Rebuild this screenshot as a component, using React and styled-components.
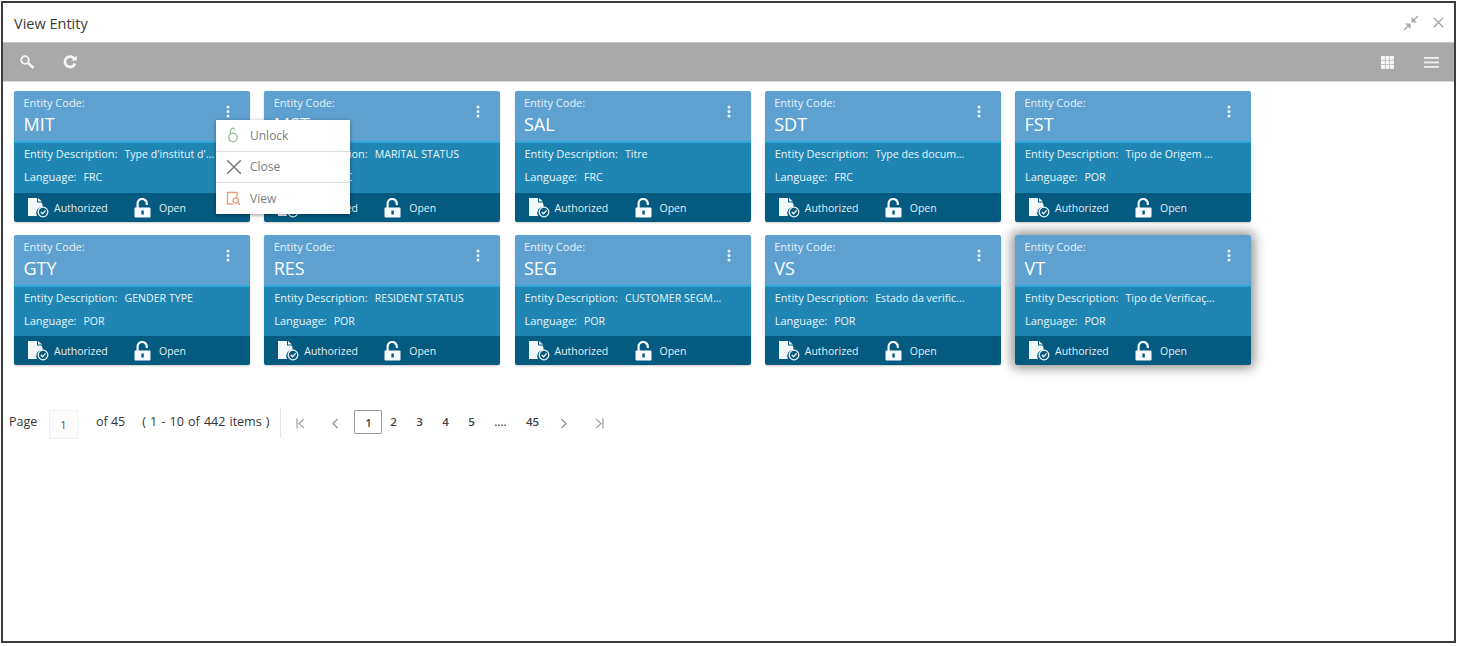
import React from 'react';
import styled, { createGlobalStyle } from 'styled-components';

const Global = createGlobalStyle`
  html, body { margin: 0; padding: 0; background: #fff; }
  body { font-family: "Open Sans", "Noto Sans", "Liberation Sans", sans-serif; }
`;
const Frame = styled.div`
  box-sizing: border-box; width: 1455px; height: 642px; margin: 1px 0 0 1px;
  border: 2px solid #3c3c3c; background: #fff; overflow: hidden;
`;
const Header = styled.header`
  height: 39px; padding: 0 11px; display: flex; align-items: center; justify-content: space-between;
  border-bottom: 1px solid #c8c8c8;
`;
const Title = styled.h1`
  margin: 3px 0 0; font-size: 14.5px; font-weight: 400; color: #3a3a3a; line-height: 1;
`;
const WinTools = styled.div`
  display: flex; align-items: center; gap: 14px; color: #a8a8a8; margin-right: -1px;
`;
const Toolbar = styled.div`
  height: 38px; background: #a9a9a9; display: flex; align-items: center; justify-content: space-between;
  padding: 0 15px 0 16px; border-bottom: 1px solid #d8d8d8;
`;
const ToolGroup = styled.div`
  display: flex; align-items: center; gap: ${p => p.$gap}px;
`;
const Cards = styled.div`
  display: grid; grid-template-columns: repeat(5, 236px); column-gap: 14.25px; row-gap: 13px;
  padding: 9px 0 0 11px;
`;
const Card = styled.article`
  position: relative; height: ${p => p.$h}px; display: flex; flex-direction: column; border-radius: 2px;
  color: #fff; box-shadow: ${p => p.$active ? '0 0 12px 3px rgba(0,0,0,.45)' : '0 1px 2px rgba(0,0,0,.2)'};
`;
const CardHead = styled.div`
  position: relative; flex: 0 0 52px; box-sizing: border-box; padding: 5px 9.5px 0; background: #5ea1d0;
  border-bottom: 2px solid #2fa5da; border-radius: 2px 2px 0 0;
`;
const CodeLabel = styled.div`
  font-size: 11px; line-height: 14px; color: #e6f1f8; font-weight: 500;
`;
const CodeValue = styled.div`
  font-size: 18px; line-height: 26px; margin-top: 1px; color: #fff; font-weight: 500;
`;
const Kebab = styled.svg`
  position: absolute; right: 20px; top: 14px;
`;
const CardBody = styled.div`
  flex: 1; background: #1f86b3; padding: 2px 10px 0; display: flex; flex-direction: column; gap: 5px;
`;
const Info = styled.div`
  font-size: 11px; line-height: 18px; white-space: nowrap; color: #eaf4f9; font-weight: 500;
  & > span { margin-left: 7px; font-size: 10.6px; }
`;
const CardFoot = styled.div`
  flex: 0 0 29px; background: #055a80; display: flex; align-items: center; padding: 0 0 0 14px;
  border-radius: 0 0 2px 2px;
`;
const Status = styled.div`
  display: flex; align-items: center; gap: ${p => p.$gap}px; font-size: 10.5px; color: #e4eff5; width: ${p => p.$w}px;
  font-weight: 500;
`;
const Menu = styled.ul`
  position: absolute; z-index: 5; left: 202px; top: 29px; width: 134px; margin: 0; padding: 0; list-style: none;
  background: #fff; box-shadow: 0 1px 4px rgba(0,0,0,.4); color: #7d7d7d; font-size: 12px;
`;
const MenuItem = styled.li`
  height: 30.5px; display: flex; align-items: center; padding-left: 10px;
  & + & { border-top: 1px solid #dcdcdc; }
  & > svg { flex: none; }
`;
const MenuIconSlot = styled.span`
  width: 24px; display: flex; align-items: center;
`;
const Pager = styled.nav`
  display: flex; align-items: center; height: 34px; margin: 39px 0 0 6px; color: #333; font-size: 12.5px;
`;
const PageLabel = styled.span`
  width: 40px; font-weight: 500; padding-top: 1px;
`;
const PageInput = styled.div`
  width: 29px; height: 29px; box-sizing: border-box; margin-top: 7px; border: 1px solid #efefef; background: #fcfcfc;
  display: flex; align-items: center; justify-content: center; color: #555; font-size: 11px;
`;
const PageText = styled.span`
  margin-left: ${p => p.$ml}px; padding-top: 1px; white-space: nowrap; font-weight: 500; word-spacing: ${p => p.$ws || 0}px;
`;
const Divider = styled.div`
  width: 1px; height: 30px; background: #e6e6e6; margin: 4px 15px 0 11px;
`;
const NavIcon = styled.svg`
  flex: none; margin: 4px ${p => p.$mr}px 0 0;
`;
const PageNum = styled.span`
  width: ${p => p.$w || 26}px; text-align: center; font-weight: 600; color: #444; font-size: 11.5px;
`;
const CurrentPage = styled.span`
  width: 28px; height: 24px; margin: 2px -2px 0 0; box-sizing: border-box; border: 1px solid #999; border-radius: 1px;
  display: flex; align-items: center; justify-content: center; font-weight: 600; color: #444; font-size: 11.5px;
`;

const Search = () => (
  <svg width="16" height="16" viewBox="0 0 16 16" fill="none" stroke="#f4f4f4">
    <circle cx="6" cy="6" r="3.8" strokeWidth="1.8" /><path d="M9 9l5.5 5" strokeWidth="2.6" />
  </svg>
);
const Refresh = () => (
  <svg width="16" height="16" viewBox="0 0 16 16" fill="none">
    <path d="M12.6 5.2A5.2 5.2 0 1 0 13 9.5" stroke="#f6f6f6" strokeWidth="2.8" />
    <path d="M9.6 6.6h5.2V1.8z" fill="#f6f6f6" />
  </svg>
);
const Grid = () => (
  <svg width="13" height="13" viewBox="0 0 13 13" fill="#f6f6f6">
    {[0, 1, 2].flatMap(r => [0, 1, 2].map(c => <rect key={`${r}${c}`} x={c * 4.5} y={r * 4.5} width="3.9" height="3.9" />))}
  </svg>
);
const Lines = () => (
  <svg width="15" height="11" viewBox="0 0 15 11" fill="#f0f0f0">
    <rect y="0" width="15" height="1.8" /><rect y="4.5" width="15" height="1.8" /><rect y="9" width="15" height="1.8" />
  </svg>
);
const Shrink = () => (
  <svg width="16" height="16" viewBox="0 0 16 16" fill="#a8a8a8" stroke="#a8a8a8">
    <path d="M1 15l5-5" strokeWidth="1.5" /><path d="M7.5 8.5V14L2 8.5z" stroke="none" />
    <path d="M15 1l-5 5" strokeWidth="1.5" /><path d="M8.5 7.5V2L14 7.5z" stroke="none" />
  </svg>
);
const CloseX = ({ size = 11, color = '#a8a8a8', w = 1.5 }) => (
  <svg width={size} height={size} viewBox="0 0 11 11" stroke={color} strokeWidth={w} fill="none">
    <path d="M.8.8l9.4 9.4M10.2.8L.8 10.2" />
  </svg>
);
const DocCheck = () => (
  <svg width="21" height="20" viewBox="0 0 21 20">
    <path d="M0 0h9v4.5h4.5l1 2V9a6 6 0 0 0-5.5 9H0z" fill="#f2f7fa" />
    <path d="M10 0l4 3.6h-4z" fill="#f2f7fa" />
    <circle cx="15" cy="14" r="4.8" fill="none" stroke="#f2f7fa" strokeWidth="1.3" />
    <path d="M12.8 14l1.8 1.8 3-3.4" stroke="#f2f7fa" strokeWidth="1.4" fill="none" />
  </svg>
);
const Lock = () => (
  <svg width="17" height="20" viewBox="0 0 17 20">
    <path d="M3.6 10V5.6a4.6 4.6 0 0 1 9.2 0V7" stroke="#f6fafc" strokeWidth="2.2" fill="none" />
    <rect x="0.5" y="9.5" width="16" height="10" rx="1" fill="#f6fafc" />
    <rect x="7.4" y="12.5" width="2.4" height="4" fill="#055a80" />
  </svg>
);
const Dots = () => (
  <Kebab width="4" height="13" viewBox="0 0 4 13" fill="#f0f6fa">
    <circle cx="2" cy="2" r="1.5" /><circle cx="2" cy="6.5" r="1.5" /><circle cx="2" cy="11" r="1.5" />
  </Kebab>
);
const UnlockIcon = () => (
  <svg width="14" height="16" viewBox="0 0 14 16" fill="none" stroke="#9cc4a0" strokeWidth="1.4">
    <circle cx="7" cy="10.5" r="4.2" /><path d="M4.5 7V3.6A2.4 2.4 0 0 1 9 2.5" />
  </svg>
);
const ViewIcon = () => (
  <svg width="15" height="15" viewBox="0 0 15 15" fill="none" stroke="#e5a27a" strokeWidth="1.4">
    <path d="M7 13H1.5V1.5H11V6" /><circle cx="9.7" cy="9.5" r="2.6" /><path d="M11.5 11.5l2.3 2.3" />
  </svg>
);
const ChevLeft = () => (
  <NavIcon $mr={15} width="8" height="11" viewBox="0 0 8 11" fill="none" stroke="#999" strokeWidth="1.4"><path d="M6.5 1L2 5.5 6.5 10" /></NavIcon>
);
const ChevRight = () => (
  <NavIcon $mr={27} width="8" height="11" viewBox="0 0 8 11" fill="none" stroke="#999" strokeWidth="1.4"><path d="M1.5 1L6 5.5 1.5 10" /></NavIcon>
);
const First = () => (
  <NavIcon $mr={26} width="9" height="11" viewBox="0 0 9 11" fill="none" stroke="#aaa" strokeWidth="1.4"><path d="M1 .5v10M8 1L3 5.5 8 10" /></NavIcon>
);
const Last = () => (
  <NavIcon $mr={0} width="9" height="11" viewBox="0 0 9 11" fill="none" stroke="#aaa" strokeWidth="1.4"><path d="M8 .5v10M1 1l5 4.5L1 10" /></NavIcon>
);

const data = [
  ['MIT', "Type d'institut d'...", 'FRC'],
  ['MST', 'MARITAL STATUS', 'FRC'],
  ['SAL', 'Titre', 'FRC'],
  ['SDT', 'Type des docum...', 'FRC'],
  ['FST', 'Tipo de Origem ...', 'POR'],
  ['GTY', 'GENDER TYPE', 'POR'],
  ['RES', 'RESIDENT STATUS', 'POR'],
  ['SEG', 'CUSTOMER SEGM...', 'POR'],
  ['VS', 'Estado da verific...', 'POR'],
  ['VT', 'Tipo de Verificaç...', 'POR'],
];

export default function App() {
  return (
    <>
      <Global />
      <Frame>
        <Header>
          <Title>View Entity</Title>
          <WinTools><Shrink /><CloseX /></WinTools>
        </Header>
        <Toolbar>
          <ToolGroup $gap={27}><Search /><Refresh /></ToolGroup>
          <ToolGroup $gap={30}><Grid /><Lines /></ToolGroup>
        </Toolbar>
        <Cards>
          {data.map(([code, desc, lang], i) => (
            <Card key={code} $h={i < 5 ? 131 : 130} $active={i === 9}>
              <CardHead>
                <CodeLabel>Entity Code:</CodeLabel>
                <CodeValue>{code}</CodeValue>
                <Dots />
              </CardHead>
              <CardBody>
                <Info>Entity Description:<span>{desc}</span></Info>
                <Info>Language:<span>{lang}</span></Info>
              </CardBody>
              <CardFoot>
                <Status $gap={5} $w={106}><DocCheck />Authorized</Status>
                <Status $gap={8}><Lock />Open</Status>
              </CardFoot>
              {i === 0 && (
                <Menu>
                  <MenuItem><MenuIconSlot><UnlockIcon /></MenuIconSlot>Unlock</MenuItem>
                  <MenuItem><MenuIconSlot><CloseX size={16} color="#777" w={1} /></MenuIconSlot>Close</MenuItem>
                  <MenuItem><MenuIconSlot><ViewIcon /></MenuIconSlot>View</MenuItem>
                </Menu>
              )}
            </Card>
          ))}
        </Cards>
        <Pager>
          <PageLabel>Page</PageLabel>
          <PageInput>1</PageInput>
          <PageText $ml={18}>of 45</PageText>
          <PageText $ml={17} $ws={0.9}>( 1 - 10 of 442 items )</PageText>
          <Divider />
          <First /><ChevLeft />
          <CurrentPage>1</CurrentPage>
          <PageNum>2</PageNum><PageNum>3</PageNum><PageNum>4</PageNum><PageNum>5</PageNum>
          <PageNum $w={32}>....</PageNum>
          <PageNum $w={32}>45</PageNum>
          <PageNum $w={12} />
          <ChevRight /><Last />
        </Pager>
      </Frame>
    </>
  );
}
